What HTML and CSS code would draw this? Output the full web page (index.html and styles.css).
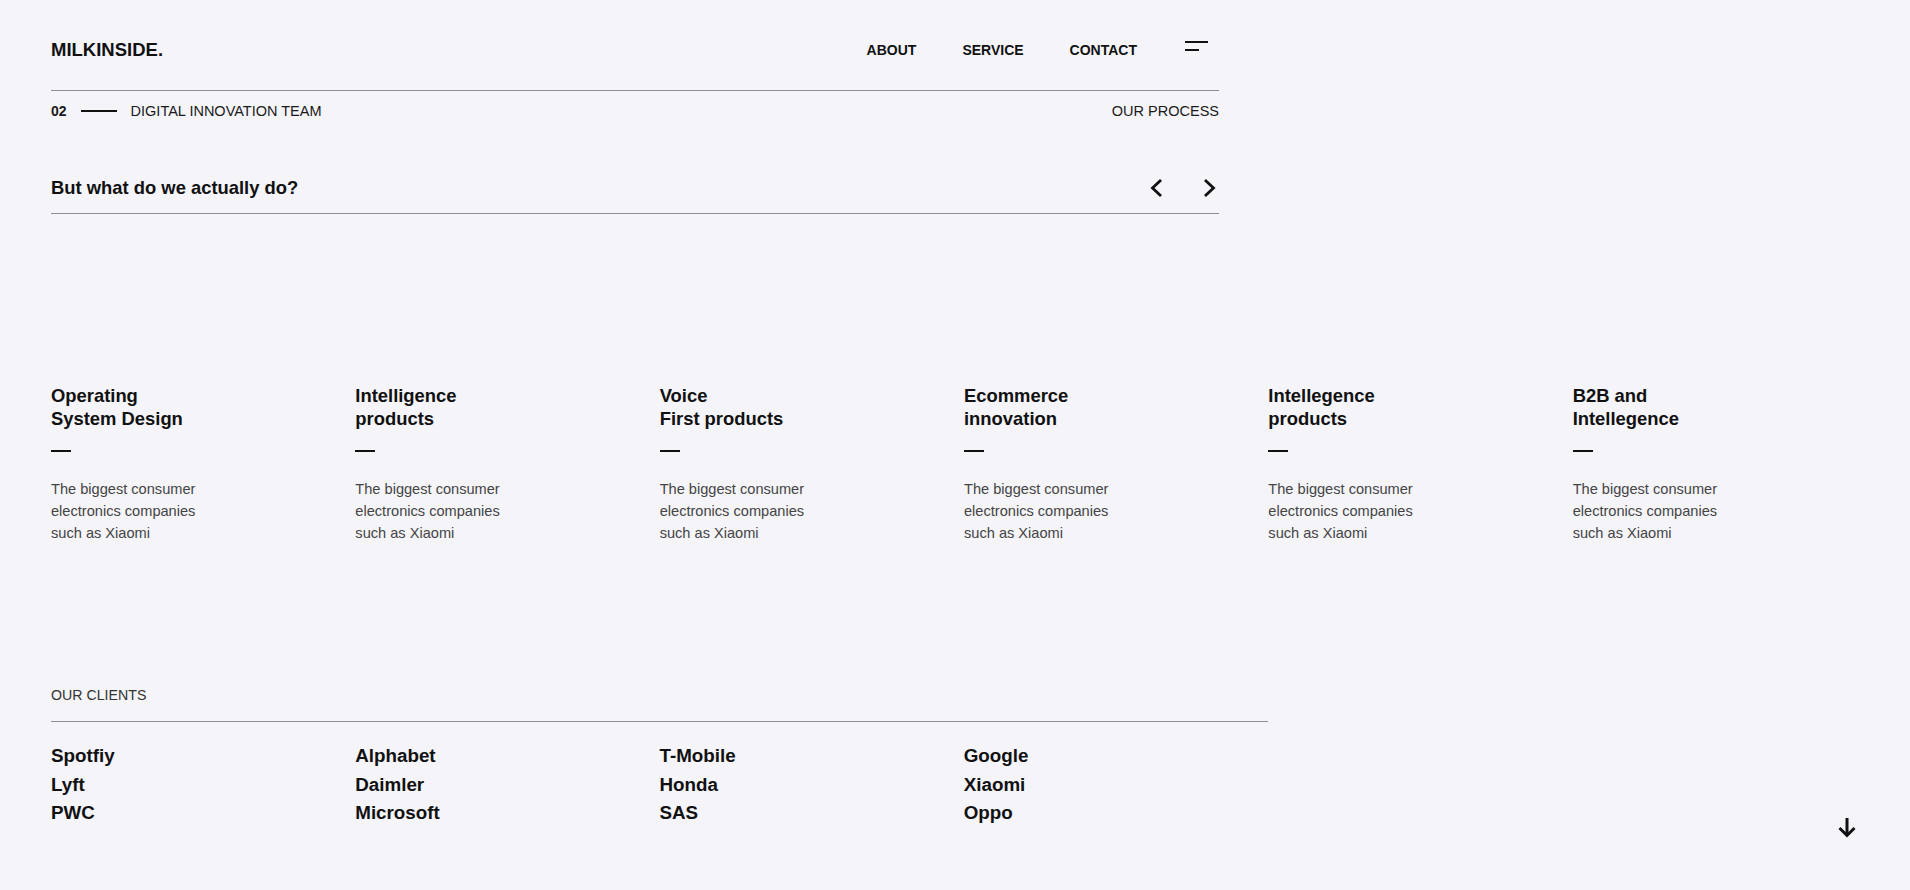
FILE: index.html
```html
<!DOCTYPE html>
<html lang="en">
<head>
<meta charset="utf-8">
<title>Milkinside — Our Process</title>
<link rel="stylesheet" href="styles.css">
</head>
<body>
<div class="page">
  <div class="top">
    <header class="header">
      <div class="logo">MILKINSIDE.</div>
      <nav class="nav">
        <a href="#">ABOUT</a>
        <a href="#">SERVICE</a>
        <a href="#">CONTACT</a>
        <span class="menu"><span class="m1"></span><span class="m2"></span></span>
      </nav>
    </header>
    <div class="sub">
      <div class="sub-left">
        <span class="num">02</span>
        <span class="dash-line"></span>
        <span>DIGITAL INNOVATION TEAM</span>
      </div>
      <div>OUR PROCESS</div>
    </div>
    <div class="question">
      <h2>But what do we actually do?</h2>
      <div class="arrows">
        <svg width="16" height="20" viewBox="0 0 16 20"><polyline points="12,3 4.5,10 12,17" fill="none" stroke="#111" stroke-width="2.8" stroke-linecap="square" stroke-linejoin="miter"/></svg>
        <svg width="16" height="20" viewBox="0 0 16 20"><polyline points="4,3 11.5,10 4,17" fill="none" stroke="#111" stroke-width="2.8" stroke-linecap="square" stroke-linejoin="miter"/></svg>
      </div>
    </div>
  </div>

  <section class="services">
    <div class="service">
      <h3>Operating<br>System Design</h3>
      <div class="bar"></div>
      <p>The biggest consumer<br>electronics companies<br>such as Xiaomi</p>
    </div>
    <div class="service">
      <h3>Intelligence<br>products</h3>
      <div class="bar"></div>
      <p>The biggest consumer<br>electronics companies<br>such as Xiaomi</p>
    </div>
    <div class="service">
      <h3>Voice<br>First products</h3>
      <div class="bar"></div>
      <p>The biggest consumer<br>electronics companies<br>such as Xiaomi</p>
    </div>
    <div class="service">
      <h3>Ecommerce<br>innovation</h3>
      <div class="bar"></div>
      <p>The biggest consumer<br>electronics companies<br>such as Xiaomi</p>
    </div>
    <div class="service">
      <h3>Intellegence<br>products</h3>
      <div class="bar"></div>
      <p>The biggest consumer<br>electronics companies<br>such as Xiaomi</p>
    </div>
    <div class="service">
      <h3>B2B and<br>Intellegence</h3>
      <div class="bar"></div>
      <p>The biggest consumer<br>electronics companies<br>such as Xiaomi</p>
    </div>
  </section>

  <section class="clients">
    <div class="clients-label">OUR CLIENTS</div>
    <div class="client-grid">
      <span>Spotfiy</span><span>Lyft</span><span>PWC</span>
      <span>Alphabet</span><span>Daimler</span><span>Microsoft</span>
      <span>T-Mobile</span><span>Honda</span><span>SAS</span>
      <span>Google</span><span>Xiaomi</span><span>Oppo</span>
    </div>
  </section>
</div>

<a class="scroll-down" href="#">
  <svg width="20" height="20" viewBox="0 0 20 20"><line x1="10" y1="0" x2="10" y2="17" stroke="#111" stroke-width="3"/><polyline points="2.5,10 10,17.5 17.5,10" fill="none" stroke="#111" stroke-width="3"/></svg>
</a>
</body>
</html>
```

FILE: styles.css
```css
html, body {
  margin: 0;
  padding: 0;
}

body {
  background: #f4f4f9;
  color: #111;
  font-family: "Liberation Sans", Arial, sans-serif;
  overflow: hidden;
}

.page {
  padding: 0 33px 0 51px;
}

.top {
  width: 1168px;
}

.header {
  display: flex;
  align-items: center;
  justify-content: space-between;
  height: 38px;
  padding: 31px 0 21px;
  border-bottom: 1px solid #8e8e94;
}

.logo {
  font-size: 18.5px;
  font-weight: 700;
}

.nav {
  display: flex;
  align-items: center;
  gap: 46px;
}

.nav a {
  font-size: 14px;
  font-weight: 700;
  color: #111;
  text-decoration: none;
}

.menu {
  display: flex;
  flex-direction: column;
  gap: 6px;
  margin: -8px 11px 0 2px;
}

.menu span {
  display: block;
  height: 2px;
  background: #111;
}

.menu .m1 {
  width: 23px;
}

.menu .m2 {
  width: 14px;
}

.sub {
  display: flex;
  align-items: center;
  justify-content: space-between;
  height: 40px;
  font-size: 14.5px;
  color: #1a1a1a;
}

.sub-left {
  display: flex;
  align-items: center;
  gap: 14px;
}

.num {
  font-weight: 600;
  font-size: 14px;
}

.dash-line {
  display: block;
  width: 36px;
  height: 2px;
  background: #111;
}

.question {
  display: flex;
  align-items: center;
  justify-content: space-between;
  height: 22px;
  padding: 46px 0 14px;
  border-bottom: 1px solid #8e8e94;
}

.question h2 {
  margin: 0;
  font-size: 18.4px;
  line-height: 22px;
  font-weight: 700;
}

.arrows {
  display: flex;
  gap: 38px;
  margin-right: 1px;
}

.arrows svg {
  display: block;
}

.services {
  display: grid;
  grid-template-columns: repeat(6, 1fr);
  margin-top: 170px;
}

.service h3 {
  margin: 0;
  font-size: 18.4px;
  line-height: 23px;
  font-weight: 700;
}

.service .bar {
  width: 20px;
  height: 2px;
  background: #111;
  margin-top: 20px;
}

.service p {
  margin: 26px 0 0;
  font-size: 14.6px;
  line-height: 22px;
  color: #444;
}

.clients {
  width: 1217px;
  margin-top: 141px;
}

.clients-label {
  font-size: 14.2px;
  line-height: 20px;
  color: #333;
  padding-bottom: 16px;
  border-bottom: 1px solid #8e8e94;
}

.client-grid {
  display: grid;
  grid-template-columns: repeat(4, 1fr);
  grid-template-rows: repeat(3, 28.5px);
  grid-auto-flow: column;
  margin-top: 20px;
  font-size: 18.8px;
  line-height: 28.5px;
  font-weight: 700;
}

.scroll-down {
  position: fixed;
  right: 53px;
  bottom: 52px;
  width: 20px;
  height: 20px;
}

.scroll-down svg {
  display: block;
}
```
